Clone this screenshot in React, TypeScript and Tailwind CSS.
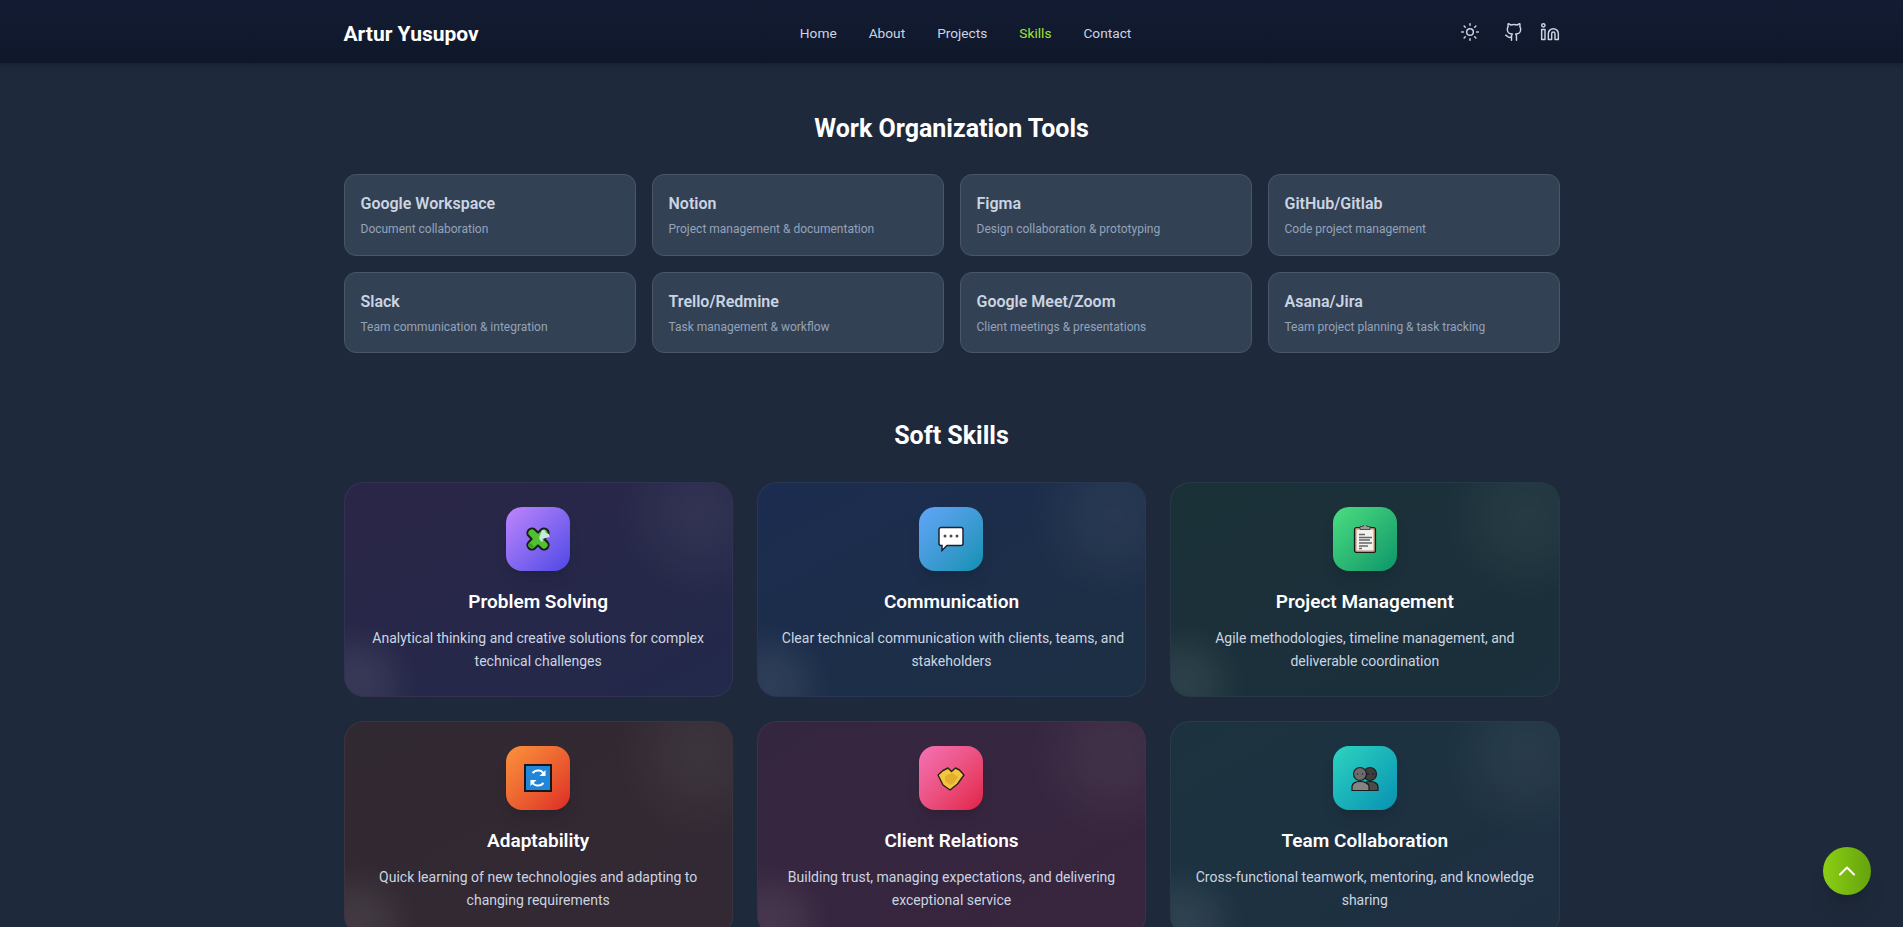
import { ChevronUp, Github, Linkedin, Sun } from "lucide-react";
import type { ReactNode } from "react";

const links = ["Home", "About", "Projects", "Skills", "Contact"];

const tools = [
  { name: "Google Workspace", text: "Document collaboration" },
  { name: "Notion", text: "Project management & documentation" },
  { name: "Figma", text: "Design collaboration & prototyping" },
  { name: "GitHub/Gitlab", text: "Code project management" },
  { name: "Slack", text: "Team communication & integration" },
  { name: "Trello/Redmine", text: "Task management & workflow" },
  { name: "Google Meet/Zoom", text: "Client meetings & presentations" },
  { name: "Asana/Jira", text: "Team project planning & task tracking" },
];

function Puzzle() {
  return (
    <svg viewBox="0 0 28 28" className="h-[28px] w-[28px]">
      <g transform="rotate(45 14 14)" stroke="#1a1a1a" strokeWidth="2" strokeLinejoin="round">
        <path
          d="M9.500 5a4.500 4 0 0 1 9 0v4.500H23a4 4.500 0 0 1 0 9h-4.500V23a4.500 4 0 0 1-9 0v-4.500H5a4 4.500 0 0 1 0-9h4.500z"
          fill="#4fc02f"
        />
      </g>
      <path d="M15 13l3-8 3 .5 1 2.500 3 1 .5 3-7 2 .5 2.500-2 0z" fill="#c9e6e0" />
      <path d="M6 18l4 4-2 1-3-3z" fill="#2f9a1d" />
    </svg>
  );
}

function Speech() {
  return (
    <svg viewBox="0 0 28 28" className="h-[28px] w-[28px]">
      <path
        d="M4 2.500h20a2 2 0 0 1 2 2v14a2 2 0 0 1-2 2H10l-5 5v-5H4a2 2 0 0 1-2-2v-14a2 2 0 0 1 2-2z"
        fill="#fff"
        stroke="#1b2330"
        strokeWidth="1.5"
      />
      <circle cx="8" cy="11" r="1.500" fill="#4a4a4a" />
      <circle cx="14" cy="11" r="1.500" fill="#4a4a4a" />
      <circle cx="20" cy="11" r="1.500" fill="#4a4a4a" />
    </svg>
  );
}

function Clipboard() {
  return (
    <svg viewBox="0 0 28 28" className="h-[28px] w-[28px]">
      <rect x="3.500" y="2.500" width="21" height="25" rx="2" fill="#b98d6b" stroke="#1a1a1a" strokeWidth="1.2" />
      <rect x="5.500" y="4.500" width="17" height="21" fill="#f2f2f0" />
      <path d="M9 1.500h3a2 2 0 0 1 4 0h3v3H9z" fill="#9b9b9b" stroke="#333" strokeWidth="0.8" />
      <path d="M8 9.500h6M8 12.500h13M8 15h11M8 18h13M8 21h9M8 23.500h3" stroke="#666" strokeWidth="1.4" />
    </svg>
  );
}

function Arrows() {
  return (
    <svg viewBox="0 0 28 28" className="h-[28px] w-[28px]">
      <rect x="1" y="1" width="26" height="26" fill="#2186d8" stroke="#16181c" strokeWidth="2" />
      <path d="M20.500 11a7 7 0 0 0-12-2M7.500 17a7 7 0 0 0 12 2" fill="none" stroke="#fff" strokeWidth="2" />
      <path d="M21.500 6v6h-6zM6.500 22v-6h6z" fill="#fff" />
    </svg>
  );
}

function Handshake() {
  return (
    <svg viewBox="0 0 28 28" className="h-[28px] w-[28px]">
      <path
        d="M1 11l5-4.500 5-2.500 3.500 3.500 4-3.500 4 2 4.500 5-6.500 9-7.500 6-7-5z"
        fill="#f4c53f"
        stroke="#2a2118"
        strokeWidth="1.4"
        strokeLinejoin="round"
      />
      <path d="M8 12l7-3 6 4-4 6-4 2-5-4z" fill="#e3ae30" />
    </svg>
  );
}

function People() {
  return (
    <svg viewBox="0 0 28 28" className="h-[28px] w-[28px]">
      <circle cx="19" cy="10" r="6.500" fill="#3d3d3d" stroke="#1c1c1c" strokeWidth="1.2" />
      <path d="M12 26.500v-4c0-3 3-5 7-5s8 2 8 5v4z" fill="#4a4a4a" stroke="#1c1c1c" strokeWidth="1.2" />
      <circle cx="9" cy="10" r="6.500" fill="#6c6c6c" stroke="#1c1c1c" strokeWidth="1.2" />
      <path d="M1 26.500v-4c0-3 3.500-5 8-5s9 2 9 5v4z" fill="#838383" stroke="#1c1c1c" strokeWidth="1.2" />
      <circle cx="6.500" cy="10" r="0.800" fill="#2a2a2a" />
      <circle cx="11.500" cy="10" r="0.800" fill="#2a2a2a" />
      <circle cx="17" cy="10" r="0.800" fill="#111" />
      <circle cx="22" cy="10" r="0.800" fill="#111" />
    </svg>
  );
}

type Skill = {
  title: string;
  line: string[];
  card: string;
  icon: string;
  art: ReactNode;
};

const skills: Skill[] = [
  {
    title: "Problem Solving",
    line: ["Analytical thinking and creative solutions for complex", "technical challenges"],
    card: "from-[#2b2648] to-[#22294a]",
    icon: "from-[#c084fc] to-[#4f46e5]",
    art: <Puzzle />,
  },
  {
    title: "Communication",
    line: ["Clear technical communication with clients, teams, and", "stakeholders"],
    card: "from-[#1c2c50] to-[#1d2f43]",
    icon: "from-[#60a5fa] to-[#0891b2]",
    art: <Speech />,
  },
  {
    title: "Project Management",
    line: ["Agile methodologies, timeline management, and", "deliverable coordination"],
    card: "from-[#1b3138] to-[#1b2f3c]",
    icon: "from-[#4ade80] to-[#059669]",
    art: <Clipboard />,
  },
  {
    title: "Adaptability",
    line: ["Quick learning of new technologies and adapting to", "changing requirements"],
    card: "from-[#312931] to-[#322934]",
    icon: "from-[#fb923c] to-[#dc2626]",
    art: <Arrows />,
  },
  {
    title: "Client Relations",
    line: ["Building trust, managing expectations, and delivering", "exceptional service"],
    card: "from-[#35263f] to-[#38253e]",
    icon: "from-[#f472b6] to-[#e11d48]",
    art: <Handshake />,
  },
  {
    title: "Team Collaboration",
    line: ["Cross-functional teamwork, mentoring, and knowledge", "sharing"],
    card: "from-[#1c333f] to-[#1e2f42]",
    icon: "from-[#2dd4bf] to-[#0891b2]",
    art: <People />,
  },
];

function ToolCard({ name, text }: { name: string; text: string }) {
  return (
    <div className="h-[81.5px] rounded-xl border border-[#4a5568] bg-[#334155] px-4 pt-[17px]">
      <h3 className="text-[16px] leading-6 font-semibold text-[#cbd5e1]">{name}</h3>
      <p className="mt-[5px] text-[12px] leading-4 text-[#94a3b8]">{text}</p>
    </div>
  );
}

function SkillCard({ skill }: { skill: Skill }) {
  return (
    <div
      className={`relative h-[215px] overflow-hidden rounded-[20px] border border-white/5 bg-gradient-to-br p-6 text-center ${skill.card}`}
    >
      <div className="absolute -top-6 -right-6 h-28 w-28 rounded-full bg-white/5 blur-xl" />
      <div className="absolute -bottom-7 -left-7 h-20 w-20 rounded-full bg-white/8 blur-lg" />
      <div className="relative">
        <div
          className={`mx-auto flex h-16 w-16 items-center justify-center rounded-2xl bg-gradient-to-br shadow-lg ${skill.icon}`}
        >
          {skill.art}
        </div>
        <h3 className="mt-[17px] text-[19px] leading-7 font-semibold text-white">{skill.title}</h3>
        <p className="mt-[11px] text-[14px] leading-[23px] whitespace-nowrap text-[#cbd5e1]">
          {skill.line[0]}
          <br />
          {skill.line[1]}
        </p>
      </div>
    </div>
  );
}

export default function App() {
  return (
    <div className="relative h-[927px] overflow-hidden bg-[#1e293b] font-['Roboto',sans-serif]">
      <header className="h-[63px] bg-gradient-to-b from-[#131c32] to-[#0f172a] shadow-[0_2px_4px_rgba(15,23,42,0.45)]">
        <div className="mx-auto flex h-[66px] w-[1216px] items-center justify-between">
          <a className="mt-[3px] text-[21px] font-bold text-white">Artur Yusupov</a>
          <nav className="mr-[8px] flex gap-8 text-[13.7px] text-[#cbd5e1]">
            {links.map((l) => (
              <a key={l} className={l === "Skills" ? "text-[#a3e635]" : ""}>
                {l}
              </a>
            ))}
          </nav>
          <div className="-mt-[2px] -mr-px flex items-center text-[#cbd5e1]">
            <Sun size={20} strokeWidth={1.75} />
            <Github size={20} strokeWidth={1.75} className="ml-6" />
            <Linkedin size={20} strokeWidth={1.75} className="ml-4" />
          </div>
        </div>
      </header>

      <main className="mx-auto w-[1216px]">
        <h2 className="mt-[48px] text-center text-[25px] leading-9 font-bold text-white">
          Work Organization Tools
        </h2>
        <div className="mt-[27px] grid grid-cols-4 gap-4">
          {tools.map((t) => (
            <ToolCard key={t.name} {...t} />
          ))}
        </div>
        <h2 className="mt-[65px] text-center text-[25px] leading-9 font-bold text-white">Soft Skills</h2>
        <div className="mt-[28px] grid grid-cols-3 gap-6">
          {skills.map((s) => (
            <SkillCard key={s.title} skill={s} />
          ))}
        </div>
      </main>

      <button className="absolute right-[32px] bottom-[32px] flex h-12 w-12 items-center justify-center rounded-full bg-gradient-to-r from-[#8ccf14] to-[#65a30d] text-white shadow-xl">
        <ChevronUp size={28} strokeWidth={1.75} />
      </button>
    </div>
  );
}
